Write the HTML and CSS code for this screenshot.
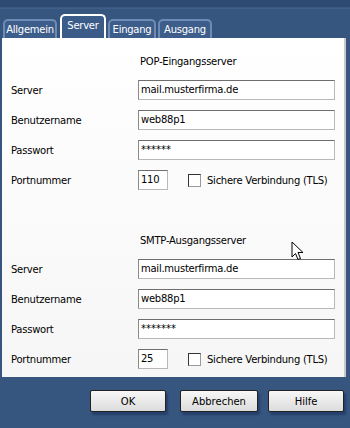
FILE: index.html
```html
<!DOCTYPE html>
<html lang="de">
<head>
    <title>Kontoeinstellungen</title>
    <meta charset="utf-8">
    <meta name="viewport" content="width=device-width, initial-scale=1">
    <link rel="stylesheet" href="styles.css">
</head>
<body>
    <div class="dialog">
        <nav class="tabs">
            <span class="tab tab-general">Allgemein</span>
            <span class="tab tab-server active">Server</span>
            <span class="tab tab-in">Eingang</span>
            <span class="tab tab-out">Ausgang</span>
        </nav>

        <section class="panel">
            <h2 class="section-title">POP-Eingangsserver</h2>
            <div class="form-grid">
                <label>Server</label>
                <div class="field">mail.musterfirma.de</div>
                <label>Benutzername</label>
                <div class="field">web88p1</div>
                <label>Passwort</label>
                <div class="field pw">******</div>
                <label>Portnummer</label>
                <div class="port-row">
                    <div class="field port">110</div>
                    <span class="checkbox"></span>
                    <span>Sichere Verbindung (TLS)</span>
                </div>
            </div>

            <h2 class="section-title">SMTP-Ausgangsserver</h2>
            <div class="form-grid">
                <label>Server</label>
                <div class="field">mail.musterfirma.de</div>
                <label>Benutzername</label>
                <div class="field">web88p1</div>
                <label>Passwort</label>
                <div class="field pw">*******</div>
                <label>Portnummer</label>
                <div class="port-row">
                    <div class="field port">25</div>
                    <span class="checkbox"></span>
                    <span>Sichere Verbindung (TLS)</span>
                </div>
            </div>

            <svg class="cursor" width="13" height="21" viewBox="0 0 13 21">
                <path d="M1 1 L1 16 L4.5 12.5 L7 18.5 L9.5 17.5 L7 11.5 L12 11.5 Z" fill="#fff" stroke="#000" stroke-width="1"/>
            </svg>
        </section>

        <footer class="buttons">
            <button type="button" class="btn btn-ok">OK</button>
            <button type="button" class="btn btn-cancel">Abbrechen</button>
            <button type="button" class="btn btn-help">Hilfe</button>
        </footer>
    </div>
</body>
</html>
```

FILE: styles.css
```css
body {
    margin: 0;
    font-family: 'DejaVu Sans', Tahoma, sans-serif;
    font-size: 10px;
    letter-spacing: -0.25px;
    color: #000;
    background: #36557f;
    width: 350px;
    height: 428px;
    overflow: hidden;
}

.dialog {
    background: linear-gradient(#2d4a73 0, #2d4a73 7px, #4a6892 8px, #36557f 9px);
    height: 428px;
}

/* Tab strip */
.tabs {
    display: flex;
    align-items: flex-end;
    padding: 14px 0 0 3px;
    height: 24px;
}

.tab {
    color: #fff;
    text-align: center;
    background: #3d5d8b;
    border: 2px solid #6d8bb4;
    border-bottom: none;
    border-radius: 5px 5px 0 0;
    height: 17px;
    line-height: 17px;
    box-sizing: content-box;
    margin-right: 2px;
}

.tab.active {
    border-color: #fff;
    height: 22px;
    line-height: 19px;
    background: #3b5b89;
}

.tab-general { width: 50px; margin-right: 3px; }
.tab-server { width: 42px; }
.tab-in { width: 44px; }
.tab-out { width: 50px; }

/* Panel */
.panel {
    position: relative;
    margin: 0 4px 0 2px;
    padding: 17px 11px 10px 9px;
    height: 312px;
    background: linear-gradient(#ffffff, #f6f6f6);
    border-right: 2px solid #c9c9c9;
    box-sizing: content-box;
}

.section-title {
    margin: 0 0 11px 129px;
    font-size: 10px;
    font-weight: normal;
    line-height: 14px;
}

.form-grid {
    display: grid;
    grid-template-columns: 127px 197px;
    grid-auto-rows: 20px;
    row-gap: 10px;
    align-items: center;
}

.form-grid + .section-title {
    margin-top: 44px;
}

.field {
    height: 20px;
    box-sizing: border-box;
    border: 1px solid #b8b8b8;
    border-top-color: #6e6e6e;
    border-left-color: #8a8a8a;
    background: #fff;
    padding: 0 2px;
    line-height: 18px;
}

.pw {
    letter-spacing: 0;
}

.port-row {
    display: flex;
    align-items: center;
}

.field.port {
    width: 30px;
}

.checkbox {
    width: 11px;
    height: 11px;
    border: 1px solid #333;
    border-right-color: #9a9a9a;
    border-bottom-color: #9a9a9a;
    background: #fff;
    margin: 0 6px 0 20px;
}

.cursor {
    position: absolute;
    left: 289px;
    top: 203px;
}

/* Dialog buttons */
.buttons {
    display: flex;
    padding: 13px 0 0 90px;
}

.btn {
    height: 22px;
    font-family: 'DejaVu Sans', Tahoma, sans-serif;
    font-size: 10px;
    color: #000;
    background: linear-gradient(#f7f7f7, #dcdcdc);
    border: 1px solid #222;
    border-radius: 2px;
    box-shadow: 2px 3px 2px #25406a;
    padding: 0;
}

.btn-ok {
    width: 76px;
    margin-right: 14px;
}

.btn-cancel {
    width: 78px;
    margin-right: 10px;
}

.btn-help {
    width: 76px;
}
```
